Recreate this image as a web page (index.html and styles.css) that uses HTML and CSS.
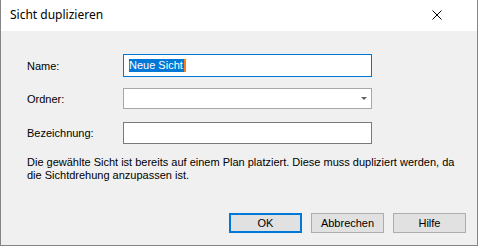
FILE: index.html
```html
<!DOCTYPE html>
<html lang="de">
<head>
    <meta charset="UTF-8">
    <title>Sicht duplizieren</title>
    <link rel="stylesheet" href="styles.css">
</head>
<body>
    <div class="window">
        <div class="title-bar">
            <span class="title">Sicht duplizieren</span>
            <span class="close">
                <svg width="10" height="10" viewBox="0 0 10 10">
                    <path d="M0.5 0.5 L9.5 9.5 M9.5 0.5 L0.5 9.5" stroke="#000" stroke-width="1" fill="none"/>
                </svg>
            </span>
        </div>
        <div class="content">
            <div class="row row-name">
                <label class="label">Name:</label>
                <div class="field field-focus">
                    <span class="sel">Neue Sicht</span><span class="caret"></span>
                </div>
            </div>
            <div class="row row-folder">
                <label class="label">Ordner:</label>
                <div class="field field-combo">
                    <span class="arrow"></span>
                </div>
            </div>
            <div class="row row-desc">
                <label class="label">Bezeichnung:</label>
                <div class="field field-text"></div>
            </div>
            <p class="message">Die gewählte Sicht ist bereits auf einem Plan platziert. Diese muss dupliziert werden, da die Sichtdrehung anzupassen ist.</p>
            <div class="buttons">
                <button class="btn btn-default">OK</button>
                <button class="btn">Abbrechen</button>
                <button class="btn">Hilfe</button>
            </div>
        </div>
    </div>
</body>
</html>
```

FILE: styles.css
```css
* {
    margin: 0;
    padding: 0;
    box-sizing: border-box;
}
body {
    background-color: #fff;
    font-family: "Liberation Sans", Arial, sans-serif;
    font-size: 11px;
    color: #000;
}
.window {
    width: 478px;
    height: 246px;
    border: 1px solid #858585;
    border-top: none;
    display: flex;
    flex-direction: column;
}
.title-bar {
    height: 31px;
    background-color: #fff;
    display: flex;
    align-items: center;
    justify-content: space-between;
    padding: 0 35px 2px 9px;
}
.title {
    font-family: "Noto Sans", "Open Sans", sans-serif;
    font-size: 12px;
}
.close {
    display: flex;
    width: 10px;
    height: 10px;
}
.content {
    flex: 1;
    background-color: #f0f0f0;
    padding: 23px 11px 12px 26px;
    display: flex;
    flex-direction: column;
}
.row {
    display: flex;
    align-items: center;
}
.label {
    width: 96px;
}
.field {
    width: 249px;
    background-color: #fff;
    border: 1px solid #7a7a7a;
    position: relative;
    display: flex;
    align-items: center;
}
.field-focus {
    height: 23px;
    border-color: #0078d7;
    padding-left: 5px;
}
.sel {
    background-color: #0078d7;
    color: #fff;
    line-height: 13px;
    padding-right: 1px;
}
.caret {
    width: 2px;
    height: 13px;
    background-color: #f08020;
}
.row-folder {
    margin-top: 11px;
}
.field-combo {
    height: 21px;
    border-color: #a8a8a8;
}
.arrow {
    position: absolute;
    right: 4px;
    top: 8px;
    width: 0;
    height: 0;
    border-left: 3px solid transparent;
    border-right: 3px solid transparent;
    border-top: 3px solid #606060;
}
.row-desc {
    margin-top: 13px;
}
.field-text {
    height: 22px;
}
.message {
    margin-top: 12px;
    line-height: 13px;
    width: 430px;
}
.buttons {
    margin-top: auto;
    display: flex;
    justify-content: flex-end;
    gap: 9px;
}
.btn {
    width: 73px;
    height: 20px;
    background-color: #e1e1e1;
    border: 1px solid #adadad;
    font-family: "Liberation Sans", Arial, sans-serif;
    font-size: 11px;
    color: #000;
}
.btn-default {
    border: 2px solid #0078d7;
}
```
